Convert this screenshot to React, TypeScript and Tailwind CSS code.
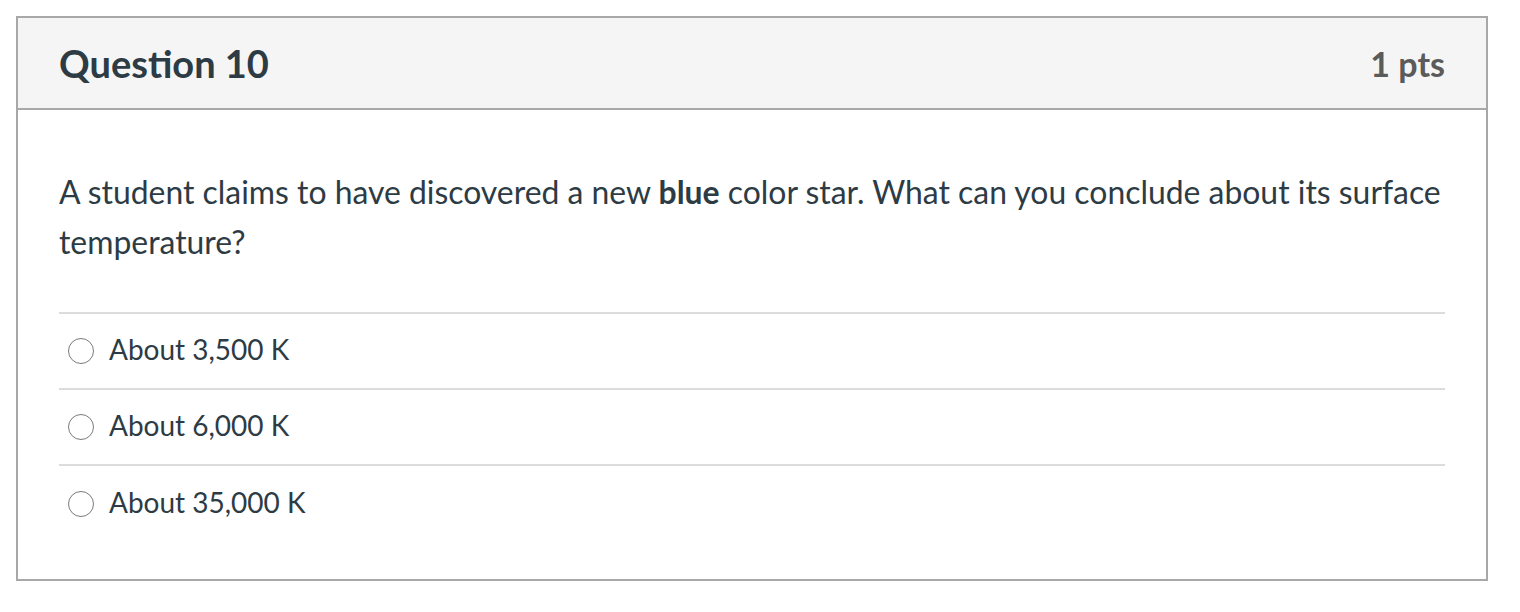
import React from "react";

const options = ["About 3,500 K", "About 6,000 K", "About 35,000 K"];

export default function App() {
  return (
    <div className="w-[1520px] h-[612px] bg-white pt-[16px] pl-[16px]" style={{ fontFamily: "Lato, 'Open Sans', sans-serif" }}>
      <div className="w-[1472px] h-[565px] border-2 border-[#a8a8a8] flex flex-col">
        <div className="h-[92px] shrink-0 bg-[#f5f5f5] border-b-2 border-[#a8a8a8] flex items-center justify-between pl-[41px] pr-[41px]">
          <div className="text-[38px] font-bold text-[#2d3b45]">Question 10</div>
          <div className="text-[34px] font-bold text-[#5b5b5b]">1 pts</div>
        </div>
        <div className="px-[41px] pt-[57px]">
          <div className="text-[31.9px] leading-[50px] text-[#2d3b45]">
            A student claims to have discovered a new <b>blue</b> color star. What can you conclude about its surface temperature?
          </div>
          <div className="mt-[45px] border-t-2 border-[#dcdcdc]">
            {options.map((o, i) => (
              <div key={o} className={"h-[76px] flex items-center " + (i < options.length - 1 ? "border-b-2 border-[#dcdcdc]" : "")}>
                <div className="ml-[9px] w-[26px] h-[26px] rounded-full border-[1.5px] border-[#7a7a7a]" />
                <div className="ml-[15px] mb-[4px] text-[28px] text-[#2d3b45]">{o}</div>
              </div>
            ))}
          </div>
        </div>
      </div>
    </div>
  );
}
